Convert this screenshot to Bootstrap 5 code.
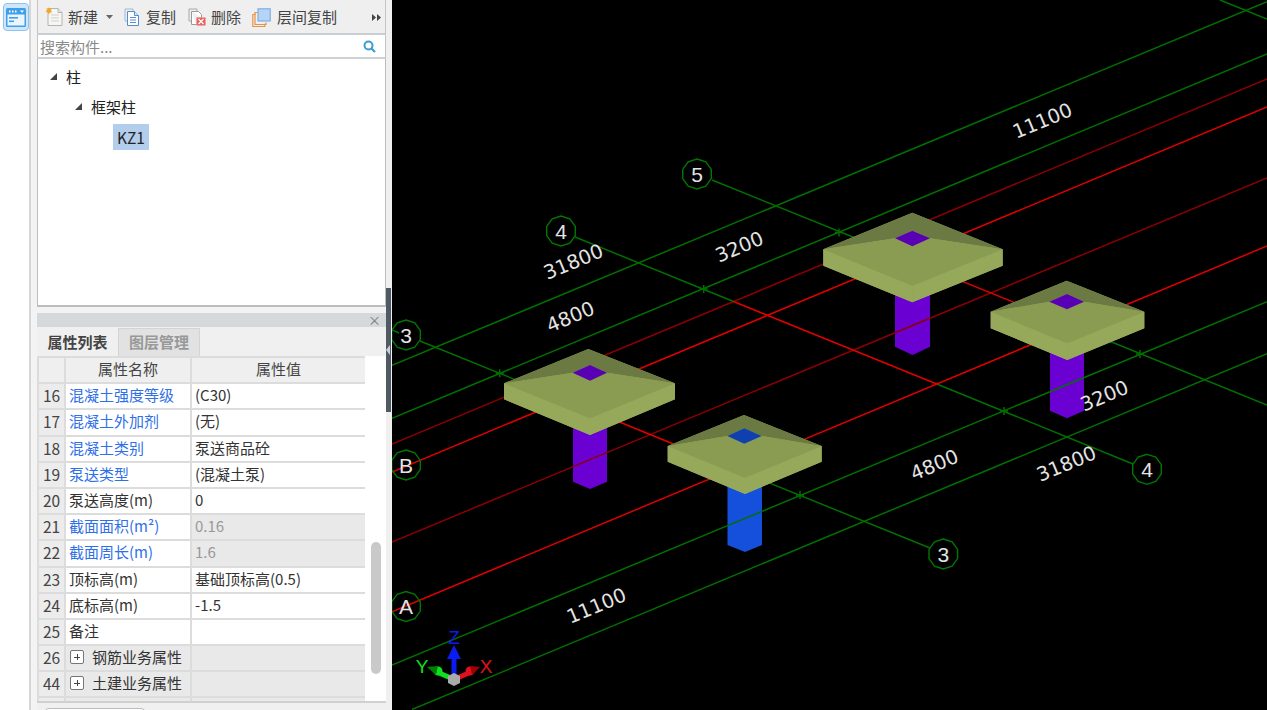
<!DOCTYPE html>
<html lang="zh-CN">
<head>
<meta charset="utf-8">
<title>构件属性</title>
<link rel="stylesheet" href="https://cdn.jsdelivr.net/npm/bootstrap@5.3.0/dist/css/bootstrap.min.css">
<style>
html,body{height:710px;overflow:hidden;background:#f3f3f3;}
body{font-family:"Noto Sans CJK SC","Liberation Sans",sans-serif;font-size:15px;color:#333;}
.shell{height:710px;}
.rail{width:31px;background:#fff;border-right:2px solid #d4d6d8;flex:none;padding-top:3px;}
.rail-btn{width:26px;height:28px;margin-left:3px;background:#cfe6fa;border:1px solid #8cc4f2;border-radius:4px;}
.side{width:349px;margin-left:6px;flex:none;}
.tools{height:35px;background:#efefef;border-left:1px solid #c4c4c4;border-right:1px solid #c4c4c4;border-bottom:2px solid #c9ced3;padding:2px 0 0 7px;color:#444;font-size:15px;white-space:nowrap;}
.tool{display:flex;align-items:center;}
.tool svg{flex:none;}
.tool-copy{margin-left:11px;}
.tool-copy span{margin-left:6px;}
.tool-del{margin-left:12px;}
.tool-del span{margin-left:5px;}
.tool-layer{margin-left:11px;}
.tool-layer span{margin-left:6px;}
.search-row{height:24px;background:#fff;border-left:1px solid #c4c4c4;border-right:1px solid #c4c4c4;border-bottom:2px solid #cfd1d3;padding:2px 9px 0 2px;color:#8a8a8a;}
.tree{height:249px;background:#fff;border:1px solid #bdbdbd;border-top:0;border-bottom-width:2px;color:#222;font-size:15px;line-height:30px;}
.tree-row{height:30px;}
.twist{width:0;height:0;border-left:7px solid transparent;border-bottom:7px solid #444;flex:none;}
.tree-one{padding-left:12px;padding-top:3px;box-sizing:content-box;}
.tree-two{padding-left:37px;}
.tree-three{padding-left:75px;}
.tree-pick{background:#b3cdec;padding:0 4px;height:26px;line-height:26px;font-size:15.5px;margin-top:2px;}
.tree-label{margin-left:9px;}
.props{margin-top:6px;height:397px;background:#f0f0f0;}
.props-head{height:14px;background:#d6d9db;color:#777;font-size:13px;line-height:14px;padding-right:5px;}
.tabs-row{height:28px;background:#f0f0f0;margin-top:1px;}
.tab-on{width:81px;font-weight:700;color:#444;line-height:27px;text-align:center;background:#f0f0f0;border-bottom:2px solid #f0f0f0;}
.tab-off{width:82px;color:#999;font-weight:700;line-height:26px;text-align:center;background:#e2e2e2;border:1px solid #d4d4d4;border-bottom:0;}
.grid-wrap{height:348px;background:#fff;overflow:hidden;border-bottom:2px solid #d0d0d0;}
.grid-box{width:328px;flex:none;overflow:hidden;}
.attr-grid{table-layout:fixed;width:328px;margin:0;border-collapse:collapse;--bs-table-bg:transparent;}
.attr-grid th,.attr-grid td{height:26.2px;padding:0 3px 2px;border:2px solid #dcdcdc;line-height:22px;font-size:15px;font-weight:400;white-space:nowrap;overflow:hidden;color:#333;background:#fff;vertical-align:middle;}
.attr-grid th{background:#efefef;text-align:center;color:#444;}
.attr-grid .idx{background:#ececec;text-align:center;color:#444;font-size:15.5px;padding:0 0 2px;}
.attr-grid .lnk{color:#2f6fe8;}
.attr-grid .shade{background:#e9e9e9;}
.attr-grid .mute{background:#e9e9e9;color:#999;}
.plus-box{width:14px;height:14px;border:1px solid #777;border-radius:2px;background:#fff;position:relative;flex:none;margin-left:1px;margin-right:8px;}
.plus-box::before,.plus-box::after{content:"";position:absolute;background:#444;}
.plus-box::before{left:3px;top:5.5px;width:6px;height:1px;}
.plus-box::after{left:5.5px;top:3px;width:1px;height:6px;}
.bar-zone{flex:1;position:relative;}
.bar-thumb{width:10px;height:132px;background:#c9c9c9;border-radius:5px;margin:186px 0 0 6px;}
.foot-row{height:7px;background:#f0f0f0;padding-left:7px;overflow:hidden;}
.foot-tab{width:102px;height:10px;background:#fff;border:1px solid #bbb;border-radius:5px 5px 0 0;margin-top:5px;}
.splitter{width:6px;flex:none;background:#f0f0f0;padding-top:288px;}
.split-grip{height:124px;background:#4f5a64;width:5px;margin-left:0;}
.split-arrow{width:0;height:0;border-top:5px solid transparent;border-bottom:5px solid transparent;border-right:4px solid #c8d0d6;}
.view{flex:1;background:#000;overflow:hidden;}
.view svg{display:block;}
.dim{font-family:"DejaVu Sans",sans-serif;font-size:19.6px;fill:#e4e4e4;text-anchor:middle;dominant-baseline:middle;}
.axis-no{font-family:"Liberation Sans",sans-serif;font-size:21px;fill:#e4e4e4;text-anchor:middle;dominant-baseline:central;}
.gizmo-txt{font-family:"Liberation Sans",sans-serif;font-size:19px;text-anchor:middle;dominant-baseline:central;}
</style>
</head>
<body>
<div class="shell d-flex">
  <aside class="rail">
    <div class="rail-btn d-flex align-items-center justify-content-center">
      <svg width="20" height="19" viewBox="0 0 20 19"><rect x="0" y="0" width="20" height="19" rx="1.5" fill="#3f9fe9"/><rect x="1.5" y="6.5" width="17" height="11" fill="#eaf5fd"/><rect x="3" y="2.5" width="1.5" height="2" fill="#fff"/><rect x="6" y="2.5" width="1.5" height="2" fill="#fff"/><rect x="9" y="2.5" width="1.5" height="2" fill="#fff"/><path d="M14 2.5h4l-2 2.2z" fill="#fff"/><rect x="3" y="9" width="9" height="1.6" fill="#3f9fe9"/><rect x="3" y="12.5" width="5" height="1.6" fill="#3f9fe9"/></svg>
    </div>
  </aside>

  <section class="side d-flex flex-column">
    <div class="tools d-flex align-items-center">
      <div class="tool">
        <svg width="19" height="20" viewBox="0 0 19 20"><path d="M3 1.5h10l4 4v13H3z" fill="#f6f6f4" stroke="#b4b4ae"/><path d="M13 1.5v4h4" fill="#e4e4e0" stroke="#b4b4ae"/><path d="M6 8h8M6 11h8M6 14h8" stroke="#cfcfca"/><path d="M3.5 0l1 2 2.2-.6-.8 2.2 1.4 1.6-2.2.2-1.2 2-1-2L.6 5 2 3.3 1.4 1.2l2 .6z" fill="#f5a623"/></svg>
        <span class="ms-1">新建</span>
        <svg class="ms-2" width="7" height="4" viewBox="0 0 7 4"><path d="M0 0h7L3.5 4z" fill="#666"/></svg>
      </div>
      <div class="tool tool-copy">
        <svg width="16" height="18" viewBox="0 0 16 18"><path d="M1 1h8v3" fill="none" stroke="#a9b6c4"/><path d="M1 1v12h2" fill="none" stroke="#a9b6c4"/><path d="M3.5 3.5h7l4 4v10h-11z" fill="#fff" stroke="#4f8fd0"/><path d="M10.5 3.5v4h4" fill="#d7e7f7" stroke="#4f8fd0"/><path d="M6 9.5h6M6 12h6M6 14.5h6" stroke="#4f8fd0"/></svg>
        <span>复制</span>
      </div>
      <div class="tool tool-del">
        <svg width="18" height="18" viewBox="0 0 18 18"><path d="M1 1h8v2M1 1v12h2" fill="none" stroke="#a8a8a8"/><path d="M3.5 3.5h7l3 3v3M3.5 3.5v13h5" fill="#fff" stroke="#9a9a9a"/><rect x="8.5" y="9.5" width="9" height="8" fill="#e8605f"/><path d="M10.5 11l5 5M15.5 11l-5 5" stroke="#fff" stroke-width="1.3"/></svg>
        <span>删除</span>
      </div>
      <div class="tool tool-layer">
        <svg width="19" height="19" viewBox="0 0 19 19"><path d="M3.5 6.5H.8v12h12v-2.7" fill="none" stroke="#e89248" stroke-width="1.2"/><path d="M5.5 4.5H3v12h11v-2" fill="none" stroke="#e89248" stroke-width="1.2"/><rect x="6" y=".8" width="12.2" height="12.2" fill="#b5d4f6" stroke="#6fa6e0"/></svg>
        <span>层间复制</span>
      </div>
      <div class="ms-auto d-flex pe-1">
        <svg width="9" height="7" viewBox="0 0 9 7"><path d="M0 0l4 3.5L0 7zM5 0l4 3.5L5 7z" fill="#444"/></svg>
      </div>
    </div>

    <div class="search-row d-flex align-items-center justify-content-between">
      <span>搜索构件...</span>
      <svg width="13" height="13" viewBox="0 0 13 13"><circle cx="5.5" cy="5.5" r="4" fill="none" stroke="#3d9dd1" stroke-width="2"/><path d="M8.5 8.5l3.5 3.5" stroke="#3d9dd1" stroke-width="2.2"/></svg>
    </div>

    <div class="tree">
      <div class="tree-row tree-one d-flex align-items-center"><span class="twist"></span><span class="tree-label">柱</span></div>
      <div class="tree-row tree-two d-flex align-items-center"><span class="twist"></span><span class="tree-label">框架柱</span></div>
      <div class="tree-row tree-three d-flex align-items-start"><span class="tree-pick">KZ1</span></div>
    </div>

    <div class="props d-flex flex-column">
      <div class="props-head text-end">×</div>
      <div class="tabs-row d-flex">
        <div class="tab-on">属性列表</div>
        <div class="tab-off">图层管理</div>
      </div>
      <div class="grid-wrap d-flex">
        <div class="grid-box">
          <table class="table attr-grid">
            <colgroup><col style="width:27px"><col style="width:126px"><col style="width:175px"></colgroup>
            <thead><tr><th></th><th>属性名称</th><th>属性值</th></tr></thead>
            <tbody>
              <tr><td class="idx">16</td><td class="lnk">混凝土强度等级</td><td>(C30)</td></tr>
              <tr><td class="idx">17</td><td class="lnk">混凝土外加剂</td><td>(无)</td></tr>
              <tr><td class="idx">18</td><td class="lnk">混凝土类别</td><td>泵送商品砼</td></tr>
              <tr><td class="idx">19</td><td class="lnk">泵送类型</td><td>(混凝土泵)</td></tr>
              <tr><td class="idx">20</td><td>泵送高度(m)</td><td>0</td></tr>
              <tr><td class="idx">21</td><td class="lnk">截面面积(m²)</td><td class="mute">0.16</td></tr>
              <tr><td class="idx">22</td><td class="lnk">截面周长(m)</td><td class="mute">1.6</td></tr>
              <tr><td class="idx">23</td><td>顶标高(m)</td><td>基础顶标高(0.5)</td></tr>
              <tr><td class="idx">24</td><td>底标高(m)</td><td>-1.5</td></tr>
              <tr><td class="idx">25</td><td>备注</td><td></td></tr>
              <tr><td class="idx">26</td><td class="shade"><div class="d-flex align-items-center"><span class="plus-box"></span>钢筋业务属性</div></td><td class="shade"></td></tr>
              <tr><td class="idx">44</td><td class="shade"><div class="d-flex align-items-center"><span class="plus-box"></span>土建业务属性</div></td><td class="shade"></td></tr>
              <tr><td class="idx"></td><td class="shade"><div class="d-flex align-items-center"><span class="plus-box"></span></div></td><td class="shade"></td></tr>
            </tbody>
          </table>
        </div>
        <div class="bar-zone"><div class="bar-thumb"></div></div>
      </div>
      <div class="foot-row"><div class="foot-tab"></div></div>
    </div>
  </section>

  <div class="splitter"><div class="split-grip d-flex align-items-center"><span class="split-arrow"></span></div></div>

  <main class="view">
    <svg width="875" height="710" viewBox="392 0 875 710" aria-label="三维轴网与独立基础视图">
      <defs>
        <polygon id="ring" points="0,-15 8.8,-12.1 14.3,-4.6 14.3,4.6 8.8,12.1 0,15 -8.8,12.1 -14.3,4.6 -14.3,-4.6 -8.8,-12.1" fill="none" stroke="#007800" stroke-width="1.4"/>
      </defs>

      <!-- columns -->
      <g fill="#6a00d2">
        <polygon points="573,425 607,425 607,481.7 590,489 573,481.7"/>
        <polygon points="895,290 930,290 930,346.7 912.5,355 895,346.7"/>
        <polygon points="1050,350 1084,350 1084,410.7 1067,418.3 1050,410.7"/>
      </g>
      <polygon points="727.5,485 762,485 762,545 745,552 727.5,545" fill="#1450dc"/>

      <!-- long grid lines -->
      <g fill="none" stroke-width="1.5">
        <g stroke="#007000">
          <path d="M392 365.4L1267 1.6"/>
          <path d="M392 418.3L1267 54"/>
          <path d="M392 665L1267 301.6"/>
          <path d="M412 709.5L1267 353.8"/>
        </g>
        <g stroke="#8a0000">
          <path d="M392 444L1267 79"/>
          <path d="M392 542L1267 178"/>
        </g>
        <g stroke="#e00000">
          <path d="M392 472L1267 107"/>
          <path d="M392 611.7L1267 246"/>
        </g>
        <!-- cross grid lines -->
        <g stroke="#007000">
          <path d="M392 330L399 333M420 341L590 410"/>
          <path d="M720 463L930 548"/>
          <path d="M575 237L733.5 301.5"/>
          <path d="M938 384.5L1133 464"/>
          <path d="M712 180L890 252"/>
          <path d="M1050 317L1267 405"/>
          <path d="M1220 0L1267 19"/>
        </g>
        <g stroke="#e00000">
          <path d="M590 410L720 463"/>
          <path d="M733.5 301.5L938 384.5"/>
          <path d="M890 252L1050 317"/>
        </g>
        <!-- crossing ticks -->
        <path stroke="#007000" d="M499.7 369.3v8M495.7 373.3h8M703.7 285v8M699.7 289h8M839 228.6v8M835 232.6h8M800 491v8M796 495h8M1004 407v8M1000 411h8M1140 350v8M1136 354h8"/>
      </g>

      <!-- footings: silhouette first so that inner seams stay free of black -->
      <g>
        <g>
          <polygon points="504,383.3 588.3,349 675,383.3 675,399.3 590,435 504,399.3" fill="#8fa255"/>
          <polygon points="504,383.3 504,399.3 590,435 590,418.3" fill="#96a95a"/>
          <polygon points="675,383.3 675,399.3 590,435 590,418.3" fill="#96a95a"/>
          <polygon points="504,383.3 588.3,349 675,383.3 607,372.7 590,365 572.7,372.7" fill="#6b7a42"/>
          <polygon points="504,383.3 572.7,372.7 590,380.7 607,372.7 675,383.3 590,418.3" fill="#8a9c52"/>
          <polygon points="572.7,372.7 590,365 607,372.7 590,380.7" fill="#5a00b4"/>
        </g>
        <g>
          <polygon points="667.7,446 744,415 821.7,446 821.7,461.7 745,494 667.7,461.7" fill="#8fa255"/>
          <polygon points="667.7,446 667.7,461.7 745,494 745,477.7" fill="#96a95a"/>
          <polygon points="821.7,446 821.7,461.7 745,494 745,477.7" fill="#96a95a"/>
          <polygon points="667.7,446 744,415 821.7,446 761.7,436 744.3,428.3 727.3,436" fill="#6b7a42"/>
          <polygon points="667.7,446 727.3,436 744.3,443.7 761.7,436 821.7,446 745,477.7" fill="#8a9c52"/>
          <polygon points="727.3,436 744.3,428.3 761.7,436 744.3,443.7" fill="#1040b0"/>
        </g>
        <g>
          <polygon points="823.3,249.3 912.3,212.7 1002.7,249.3 1002.7,265.7 912.3,302.3 823.3,265.7" fill="#8fa255"/>
          <polygon points="823.3,249.3 823.3,265.7 912.3,302.3 912.3,285.7" fill="#96a95a"/>
          <polygon points="1002.7,249.3 1002.7,265.7 912.3,302.3 912.3,285.7" fill="#96a95a"/>
          <polygon points="823.3,249.3 912.3,212.7 1002.7,249.3 930,238.3 912.3,230.7 895,238.3" fill="#6b7a42"/>
          <polygon points="823.3,249.3 895,238.3 912.3,246.3 930,238.3 1002.7,249.3 912.3,285.7" fill="#8a9c52"/>
          <polygon points="895,238.3 912.3,230.7 930,238.3 912.3,246.3" fill="#5a00b4"/>
        </g>
        <g>
          <polygon points="990.7,311.7 1066.7,280.7 1144.3,311.7 1144.3,328.3 1067.3,360 990.7,328.3" fill="#8fa255"/>
          <polygon points="990.7,311.7 990.7,328.3 1067.3,360 1067.3,343.3" fill="#96a95a"/>
          <polygon points="1144.3,311.7 1144.3,328.3 1067.3,360 1067.3,343.3" fill="#96a95a"/>
          <polygon points="990.7,311.7 1066.7,280.7 1144.3,311.7 1084,301.7 1067,294 1049.3,301.7" fill="#6b7a42"/>
          <polygon points="990.7,311.7 1049.3,301.7 1067,309.3 1084,301.7 1144.3,311.7 1067.3,343.3" fill="#8a9c52"/>
          <polygon points="1049.3,301.7 1067,294 1084,301.7 1067,309.3" fill="#5a00b4"/>
        </g>
      </g>

      <!-- axis bubbles -->
      <use href="#ring" x="406" y="335"/><text class="axis-no" x="406" y="335">3</text>
      <use href="#ring" x="561" y="231"/><text class="axis-no" x="561" y="231">4</text>
      <use href="#ring" x="697" y="174"/><text class="axis-no" x="697" y="174">5</text>
      <use href="#ring" x="406" y="465"/><text class="axis-no" x="406" y="465">B</text>
      <use href="#ring" x="406" y="606.5"/><text class="axis-no" x="406" y="606.5">A</text>
      <use href="#ring" x="943.3" y="554"/><text class="axis-no" x="943.3" y="554">3</text>
      <use href="#ring" x="1147" y="469.3"/><text class="axis-no" x="1147" y="469.3">4</text>

      <!-- dimensions -->
      <text class="dim" transform="translate(1043 122) rotate(-22.7)">11100</text>
      <text class="dim" transform="translate(740 248) rotate(-22.7)">3200</text>
      <text class="dim" transform="translate(574 263) rotate(-22.7)">31800</text>
      <text class="dim" transform="translate(571 318) rotate(-22.7)">4800</text>
      <text class="dim" transform="translate(1105 397) rotate(-22.7)">3200</text>
      <text class="dim" transform="translate(935 466) rotate(-22.7)">4800</text>
      <text class="dim" transform="translate(1067 465) rotate(-22.7)">31800</text>
      <text class="dim" transform="translate(597 607) rotate(-22.7)">11100</text>

      <!-- orientation gizmo -->
      <g>
        <path d="M453 679L437 672" stroke="#10e020" stroke-width="5"/>
        <circle cx="438" cy="671" r="4.5" fill="#10e020"/>
        <polygon points="427,667 438,666 436,675" fill="#008000"/>
        <path d="M455 679L471 672" stroke="#e01020" stroke-width="5"/>
        <circle cx="470" cy="671" r="4.5" fill="#e01020"/>
        <polygon points="480,667 470,666 472,675" fill="#a00000"/>
        <rect x="451.5" y="658" width="5" height="18" fill="#0a1cf0"/>
        <polygon points="454,645 447,659 461,659" fill="#0a1cf0"/>
        <polygon points="454,673 460,676 460,683 454,686 448,683 448,676" fill="#aaa"/>
        <text class="gizmo-txt" x="454" y="637" fill="#0a1cf0">Z</text>
        <text class="gizmo-txt" x="422" y="666" fill="#10e020">Y</text>
        <text class="gizmo-txt" x="486" y="666" fill="#e01020">X</text>
      </g>
    </svg>
  </main>
</div>
<script src="https://cdn.jsdelivr.net/npm/bootstrap@5.3.0/dist/js/bootstrap.bundle.min.js"></script>
</body>
</html>
